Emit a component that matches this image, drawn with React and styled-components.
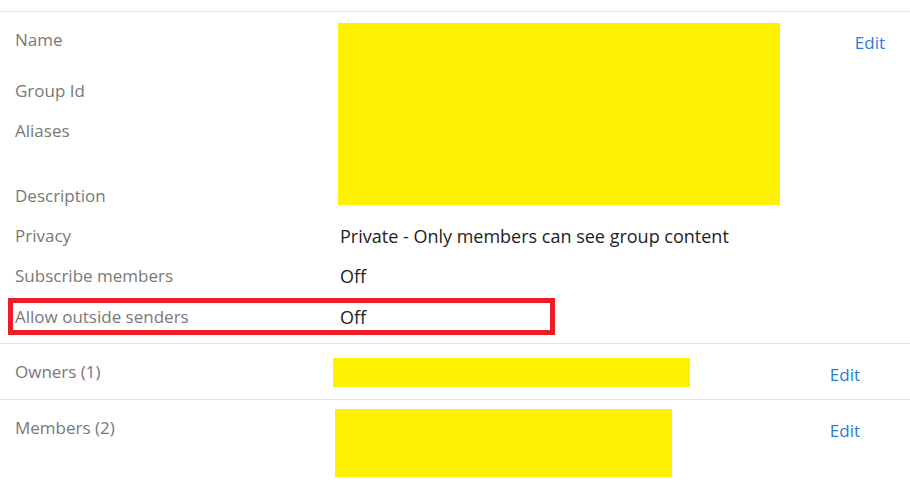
import React from 'react';
import styled, { createGlobalStyle } from 'styled-components';

const GlobalStyle = createGlobalStyle`
  html, body {
    margin: 0;
    padding: 0;
    background: #fff;
  }
  body {
    font-family: "Segoe UI", "Open Sans", "Noto Sans", sans-serif;
    font-size: 17px;
    color: #222;
  }
`;

const Page = styled.div`
  width: 910px;
  height: 490px;
  overflow: hidden;
  padding-top: 11px;
  box-sizing: border-box;
`;

const Section = styled.section`
  border-top: 1px solid #e1e1e1;
  box-sizing: border-box;
`;

const PropertyGrid = styled.div`
  display: grid;
  grid-template-columns: 338px 1fr auto;
  grid-template-rows: 51px 40px 65px 40px 40px 40px 40px;
  padding: 8px 0 7px 0;
`;

const Label = styled.div`
  grid-column: 1;
  grid-row: ${p => p.$row};
  color: #787878;
  line-height: 24px;
  padding: ${p => p.$top ?? 8}px 0 0 15px;
  white-space: nowrap;
`;

const Value = styled.div`
  grid-column: 2;
  grid-row: ${p => p.$row};
  font-size: 18px;
  line-height: 24px;
  padding: 8px 0 0 2px;
  white-space: nowrap;
`;

const Redacted = styled.div`
  background: #fdf000;
  width: ${p => p.$w}px;
  height: ${p => p.$h}px;
  margin-top: ${p => p.$top || 0}px;
  grid-row: ${p => p.$rows || 'auto'};
  grid-column: ${p => p.$col || 'auto'};
  align-self: start;
`;

const EditLink = styled.a`
  grid-row: 1;
  grid-column: 3;
  color: #2b7cd3;
  line-height: 24px;
  padding-top: ${p => p.$top}px;
  margin-right: ${p => p.$right}px;
  text-decoration: none;
  cursor: pointer;
`;

const Highlight = styled.div`
  grid-column: 1 / 3;
  grid-row: 7;
  width: 547px;
  height: 37px;
  margin: 2px 0 0 8px;
  box-sizing: border-box;
  border: 5px solid #ee1c25;
  display: grid;
  grid-template-columns: 327px 1fr;
  align-items: center;
`;

const HighlightLabel = styled.div`
  line-height: 24px;
  color: #787878;
  padding-left: 2px;
  white-space: nowrap;
`;

const HighlightValue = styled.div`
  font-size: 18px;
  line-height: 24px;
  white-space: nowrap;
`;

const SummaryRow = styled(Section)`
  display: grid;
  grid-template-columns: ${p => p.$labelWidth}px 1fr auto;
  padding: ${p => p.$top}px 50px 0 0;
  height: ${p => (p.$height ? `${p.$height}px` : 'auto')};
`;

export default function App() {
  return (
    <Page>
      <GlobalStyle />
      <Section>
        <PropertyGrid>
          <Label $row={1}>Name</Label>
          <Label $row={2}>Group Id</Label>
          <Label $row={3}>Aliases</Label>
          <Label $row={4}>Description</Label>
          <Redacted $w={442} $h={182} $top={3} $col={2} $rows="1 / 5" />
          <EditLink $top={11} $right={25}>Edit</EditLink>
          <Label $row={5}>Privacy</Label>
          <Value $row={5}>Private - Only members can see group content</Value>
          <Label $row={6}>Subscribe members</Label>
          <Value $row={6}>Off</Value>
          <Highlight>
            <HighlightLabel>Allow outside senders</HighlightLabel>
            <HighlightValue>Off</HighlightValue>
          </Highlight>
        </PropertyGrid>
      </Section>
      <SummaryRow $labelWidth={333} $top={14} $height={56}>
        <Label $top={2}>Owners (1)</Label>
        <Redacted $w={357} $h={29} />
        <EditLink $top={5} $right={0}>Edit</EditLink>
      </SummaryRow>
      <SummaryRow $labelWidth={335} $top={9}>
        <Label $top={7}>Members (2)</Label>
        <Redacted $w={337} $h={68} />
        <EditLink $top={10} $right={0}>Edit</EditLink>
      </SummaryRow>
    </Page>
  );
}
